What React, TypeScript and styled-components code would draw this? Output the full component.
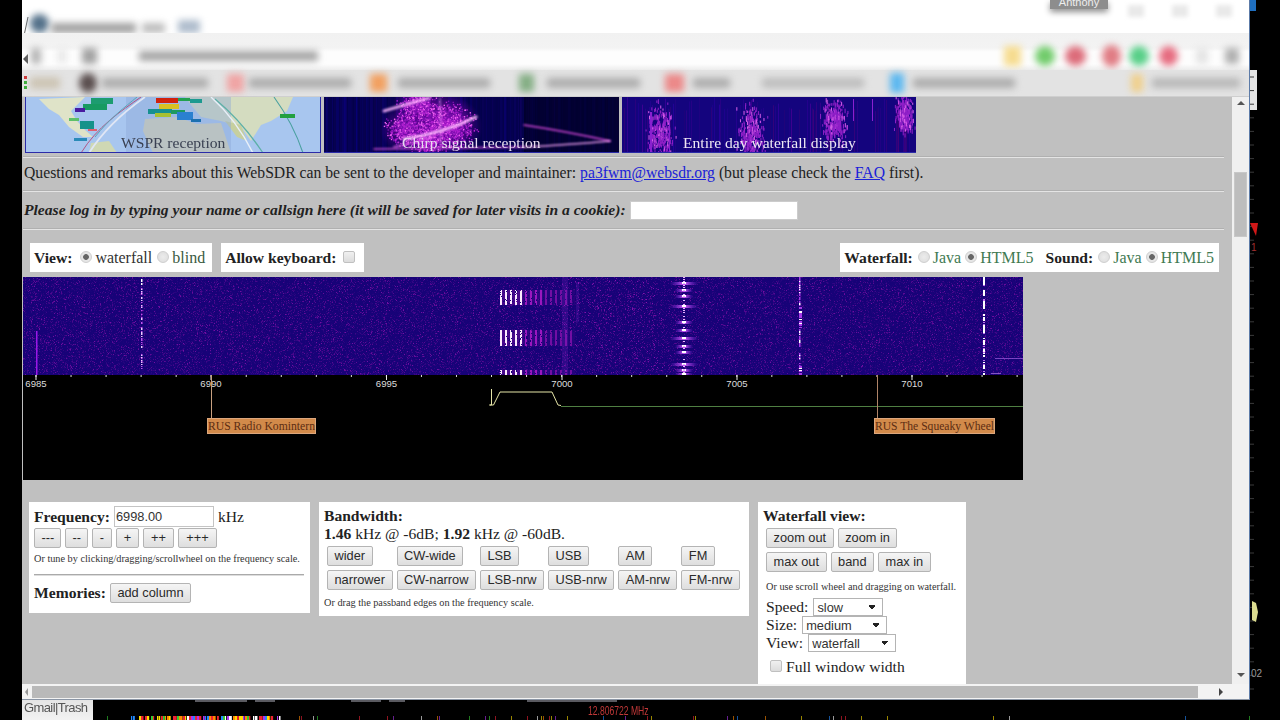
import { useEffect, useRef } from 'react'
import styled, { createGlobalStyle } from 'styled-components'

type Painter = (ctx: CanvasRenderingContext2D, w: number, h: number) => void
// page x from, page x to, colour, height
type Blot = [number, number, string, number?, boolean?]

const serif = '"Liberation Serif", "Times New Roman", serif'
const sans = '"Liberation Sans", Arial, sans-serif'

const GlobalStyle = createGlobalStyle`
  html, body {
    margin: 0;
    padding: 0;
    background: #000;
    overflow: hidden;
  }
`

const Desktop = styled.div`
  width: 1280px;
  height: 720px;
  background: #000;
  display: grid;
  grid-template-columns: 22px 1228px 30px;
  grid-template-rows: 700px 20px;
  overflow: hidden;
`
const Window = styled.div`
  grid-column: 2;
  display: flex;
  flex-direction: column;
  border-right: 1px solid #5c7ba8;
  border-bottom: 1px solid #8a95a5;
  box-sizing: border-box;
  background: #f0f0f0;
  overflow: hidden;
`

/* browser chrome: everything is out of focus in the video */
const Chrome = styled.div`
  height: 97px;
  flex: none;
  display: flex;
  flex-direction: column;
  overflow: hidden;
`
const TitleBar = styled.div`
  height: 33px;
  flex: none;
  background: #fff;
  display: flex;
  align-items: flex-end;
  position: relative;
`
const TabEdge = styled.svg`
  position: absolute;
  left: 0;
  top: 15px;
`
const UserChip = styled.div`
  position: absolute;
  left: 1028px;
  top: 0;
  width: 58px;
  height: 9px;
  background: #8d8d8d;
  box-shadow: 0 3px 6px rgba(0, 0, 0, 0.45);
  color: #eee;
  font: 11px/5px ${sans};
  text-align: center;
  overflow: hidden;
`
const WindowControls = styled.div`
  position: absolute;
  left: 1106px;
  top: 5px;
  display: flex;
  gap: 28px;
  filter: blur(2px);
`
const WindowControl = styled.div`
  width: 16px;
  height: 12px;
  background: #e9e9e9;
`
const ToolBar = styled.div`
  height: 37px;
  flex: none;
  background: linear-gradient(#f1f1f1 0, #f3f3f3 15px, #fdfdfd 19px, #fdfdfd 31px, #ececec 37px);
  display: flex;
  align-items: center;
  padding-top: 8px;
  box-sizing: border-box;
  position: relative;
`
const Chevron = styled.div`
  position: absolute;
  left: 1px;
  top: 21px;
  width: 0;
  height: 0;
  border-top: 5px solid transparent;
  border-bottom: 5px solid transparent;
  border-right: 5px solid #555;
`
const Bookmarks = styled.div`
  flex: 1;
  background: #e3e3e3;
  display: flex;
  align-items: center;
  border-bottom: 1px solid #cfcfcf;
  position: relative;
`
const BookmarkDots = styled.div`
  position: absolute;
  left: 2px;
  top: 6px;
  display: flex;
  flex-direction: column;
  gap: 2px;
`
const Dot = styled.div<{ $c: string }>`
  width: 3px;
  height: 3px;
  background: ${p => p.$c};
`
const Smudge = styled.div<{ $w: number; $h: number; $c: string; $round: boolean; $lead: number }>`
  width: ${p => p.$w}px;
  height: ${p => p.$h}px;
  background: ${p => p.$c};
  border-radius: ${p => (p.$round ? '50%' : '1px')};
  margin-left: ${p => p.$lead}px;
  flex: none;
  filter: blur(3.5px);
`

const Middle = styled.div`
  flex: 1;
  min-height: 0;
  display: flex;
`
const Content = styled.div`
  flex: 1;
  min-width: 0;
  background: #c0c0c0;
  padding-left: 1px;
  overflow: hidden;
  color: #222;
  font-family: ${serif};
  font-size: 15.6px;
`
const VScroll = styled.div`
  width: 17px;
  flex: none;
  background: #f0f0f0;
  display: flex;
  flex-direction: column;
  align-items: center;
  position: relative;
`
const VThumb = styled.div`
  position: absolute;
  left: 2px;
  top: 75px;
  width: 13px;
  height: 65px;
  background: #bdbdbd;
  border: 1px solid #c8c8c8;
  box-sizing: border-box;
`
const ArrowUp = styled.div`
  width: 0;
  height: 0;
  margin-top: 4px;
  border-left: 4px solid transparent;
  border-right: 4px solid transparent;
  border-bottom: 4px solid #555;
`
const ArrowDown = styled.div`
  width: 0;
  height: 0;
  margin-top: auto;
  margin-bottom: 7px;
  border-left: 4px solid transparent;
  border-right: 4px solid transparent;
  border-top: 4px solid #555;
`
const HScroll = styled.div`
  height: 15px;
  flex: none;
  background: #f3f3f3;
  display: flex;
  align-items: center;
  padding: 0 26px 0 3px;
  gap: 4px;
`
const HThumb = styled.div`
  width: 1166px;
  height: 12px;
  background: #b9b9b9;
`
const ArrowLeft = styled.div`
  width: 0;
  height: 0;
  border-top: 4px solid transparent;
  border-bottom: 4px solid transparent;
  border-right: 3px solid #999;
`
const ArrowRight = styled.div`
  width: 0;
  height: 0;
  margin-left: auto;
  border-top: 4px solid transparent;
  border-bottom: 4px solid transparent;
  border-left: 4px solid #444;
`

/* page */
const ThumbRow = styled.div`
  display: flex;
  gap: 3px;
  margin-left: 2px;
  height: 56px;
`
const Thumb = styled.div<{ $w: number }>`
  position: relative;
  width: ${p => p.$w}px;
  height: 56px;
  overflow: hidden;
  border-bottom: 1px solid #2b2ba8;
  box-sizing: border-box;
`
const Caption = styled.div<{ $left: number; $c: string }>`
  position: absolute;
  left: ${p => p.$left}px;
  top: 37px;
  font: 15.6px/18px ${serif};
  color: ${p => p.$c};
  white-space: nowrap;
  filter: blur(0.3px);
`
const Rule = styled.div<{ $top?: number }>`
  height: 1px;
  margin: ${p => p.$top ?? 0}px 8px 0 0;
  background: #e4e4e4;
  border-top: 1px solid #b0b0b0;
`
const Remarks = styled.div`
  height: 32px;
  line-height: 30px;
  font-size: 15.7px;
  padding-left: 1px;
  white-space: nowrap;
`
const MailLink = styled.a`
  color: #1a22d8;
  text-decoration: underline;
`
const LoginRow = styled.div`
  height: 36px;
  display: flex;
  align-items: center;
  gap: 4px;
  padding-left: 1px;
  font-weight: bold;
  font-style: italic;
  white-space: nowrap;
`
const LoginInput = styled.input`
  width: 168px;
  height: 19px;
  box-sizing: border-box;
  border: 1px solid #ccc;
  background: #fff;
  padding: 0;
`
const SelectorRow = styled.div`
  display: flex;
  height: 29px;
  margin: 13px 13px 5px 7px;
  gap: 9px;
`
const SelectorBox = styled.div<{ $push?: boolean }>`
  background: #fff;
  display: flex;
  align-items: center;
  padding: 0 ${p => (p.$push ? 5 : 6)}px 0 4px;
  white-space: nowrap;
  margin-left: ${p => (p.$push ? 'auto' : '0')};
`
const Strong = styled.b<{ $gap?: number }>`
  color: #222;
  margin-right: ${p => p.$gap ?? 6}px;
`
const OptionText = styled.span<{ $c: string; $gap?: number }>`
  color: ${p => p.$c};
  font-size: 16px;
  margin-right: ${p => p.$gap ?? 0}px;
`
const Radio = styled.input.attrs({ type: 'radio' })`
  appearance: none;
  width: 12px;
  height: 12px;
  margin: 0 3px 2px 2px;
  border-radius: 50%;
  border: 1px solid #cfcfcf;
  background: radial-gradient(circle, #ececec, #dcdcdc);
  box-sizing: border-box;
  &:checked {
    background: radial-gradient(circle, #666 0 2.5px, #e6e6e6 3.2px);
  }
`
const Check = styled.input.attrs({ type: 'checkbox' })`
  appearance: none;
  width: 12px;
  height: 12px;
  margin: 0 3px 2px 3px;
  border: 1px solid #c0c0c0;
  border-radius: 2px;
  background: linear-gradient(#f0f0f0, #dcdcdc);
  box-sizing: border-box;
`
const Sdr = styled.div`
  width: 1000px;
  height: 203px;
  background: #000;
  display: flex;
  flex-direction: column;
`
const PaintedCanvas = styled.canvas`
  display: block;
  filter: blur(0.35px);
`
const ScaleSvg = styled.svg`
  display: block;
  flex: 1;
`
const PanelRow = styled.div`
  display: flex;
  align-items: flex-start;
  gap: 9px;
  margin: 22px 0 0 6px;
`
const Panel = styled.div<{ $w: number; $h: number }>`
  width: ${p => p.$w}px;
  height: ${p => p.$h}px;
  box-sizing: border-box;
  background: #fff;
  padding: 5px 5px 0;
  line-height: 18px;
  flex: none;
`
const FreqLine = styled.div`
  display: flex;
  align-items: center;
  height: 21px;
  margin-top: -1px;
  margin-bottom: 1px;
`
const FreqInput = styled.input`
  width: 100px;
  height: 21px;
  box-sizing: border-box;
  border: 1px solid #c4c4c4;
  padding: 0 1px;
  margin: 0 4px 0 4px;
  font: 12.8px ${sans};
  color: #333;
`
const ButtonLine = styled.div<{ $top?: number; $left?: number }>`
  display: flex;
  gap: 4px;
  margin-top: ${p => p.$top ?? 0}px;
  padding-left: ${p => p.$left ?? 0}px;
`
const Btn = styled.button<{ $wide?: number }>`
  height: 20px;
  box-sizing: border-box;
  padding: 0 6.5px;
  width: ${p => (p.$wide ? `${p.$wide}px` : 'auto')};
  border: 1px solid #b4b4b4;
  border-radius: 2px;
  background: linear-gradient(#f5f5f5, #dedede);
  color: #2a2a2a;
  font: 12.8px/16px ${sans};
  white-space: nowrap;
`
const TinyNote = styled.div<{ $top: number; $left?: number; $bottom?: number }>`
  font-size: 10.25px;
  line-height: 12px;
  margin-top: ${p => p.$top}px;
  margin-bottom: ${p => p.$bottom ?? 0}px;
  padding-left: ${p => p.$left ?? 0}px;
  color: #333;
  white-space: nowrap;
`
const PanelRule = styled.div`
  height: 1px;
  background: #aaa;
  border-bottom: 1px solid #ddd;
  margin: 9px 1px 0 0;
`
const MemoryLine = styled.div`
  display: flex;
  align-items: center;
  gap: 4px;
  margin-top: 6px;
  height: 21px;
`
const ModeGrid = styled.div`
  display: grid;
  grid-template-columns: repeat(6, auto);
  justify-content: start;
  justify-items: start;
  gap: 4px;
  margin: 3px 0 0 3px;
`
const SelectLine = styled.div`
  display: flex;
  align-items: center;
  gap: 5px;
  height: 18px;
  padding-left: 3px;
`
const Picker = styled.select<{ $w: number }>`
  appearance: none;
  width: ${p => p.$w}px;
  height: 18px;
  box-sizing: border-box;
  border: 1px solid #b4b4b4;
  background-color: #fff;
  background-image: linear-gradient(45deg, transparent 50%, #222 50%), linear-gradient(-45deg, transparent 50%, #222 50%);
  background-size: 3px 5px, 3px 5px;
  background-position: right 10px top 6px, right 7px top 6px;
  background-repeat: no-repeat;
  color: #333;
  padding: 0 0 0 3px;
  font: 12.8px ${sans};
`
const FullWidth = styled.div`
  display: flex;
  align-items: center;
  margin: 6px 0 0 4px;
  gap: 1px;
`

/* things outside the browser window */
const RightEdge = styled.svg`
  grid-column: 3;
  display: block;
`
const BottomStrip = styled.div`
  grid-column: 1 / 4;
  grid-row: 2;
  display: flex;
  padding-left: 22px;
`
const GmailTab = styled.div`
  width: 71px;
  flex: none;
  background: linear-gradient(#e4e4e4, #f2f2f2);
  color: #555;
  font: 13px/15px ${sans};
  letter-spacing: -0.6px;
  padding-left: 2px;
  box-sizing: border-box;
  white-space: nowrap;
  filter: blur(0.3px);
`
const StripBody = styled.div`
  position: relative;
  flex: 1;
  background: #000;
`
const Tuned = styled.div`
  position: absolute;
  left: 495px;
  top: 4px;
  color: #c03838;
  font: 13px/13px ${sans};
  transform: scaleX(0.66);
  transform-origin: left center;
  white-space: nowrap;
`

function mulberry(seed: number) {
  return () => {
    seed |= 0
    seed = (seed + 0x6d2b79f5) | 0
    let t = Math.imul(seed ^ (seed >>> 15), 1 | seed)
    t = (t + Math.imul(t ^ (t >>> 7), 61 | t)) ^ t
    return ((t ^ (t >>> 14)) >>> 0) / 4294967296
  }
}

function Painted({ paint, width, height }: { paint: Painter; width: number; height: number }) {
  const ref = useRef<HTMLCanvasElement>(null)
  useEffect(() => {
    const ctx = ref.current?.getContext('2d')
    if (ctx) paint(ctx, width, height)
  }, [paint, width, height])
  return <PaintedCanvas ref={ref} width={width} height={height} />
}

// strength 0..1 turned into the websdr palette: navy, violet, magenta, white
function heat(v: number): [number, number, number] {
  if (v < 0.45) return [18 + v * 150, 2 + v * 14, 118 + v * 60]
  if (v < 0.8) {
    const t = (v - 0.45) / 0.35
    return [86 + t * 140, 8 + t * 30, 145 + t * 95]
  }
  const t = Math.min(1, (v - 0.8) / 0.2)
  return [226 + t * 29, 38 + t * 217, 236 + t * 19]
}

const paintWaterfall: Painter = (ctx, w, h) => {
  const rnd = mulberry(7)
  const img = ctx.createImageData(w, h)
  const cw = (x: number, from: number, to: number, y: number) => y >= from && y < to && x >= 477 && x < 552
  for (let y = 0; y < h; y++) {
    for (let x = 0; x < w; x++) {
      const n = rnd()
      let v = 0.03 + Math.pow(n, 7) * 0.5
      if (x > 540 && x < 640 && n > 0.8) v += 0.05
      const i = (y * w + x) * 4
      const [r, g, b] = heat(v)
      img.data[i] = r
      img.data[i + 1] = g
      img.data[i + 2] = b
      img.data[i + 3] = 255
      if (cw(x, 13, 28, y) || cw(x, 53, 69, y) || cw(x, 93, 98, y)) {
        const sx = x - 477
        const stripe = sx % 5 < 2
        let s = 0
        if (x < 500) s = stripe ? 0.98 : 0.35
        else if (x < 520) s = stripe ? 0.62 : 0.2
        else s = stripe ? 0.52 : 0.12
        if (rnd() < 0.88) {
          const [a, c, d] = heat(s)
          img.data[i] = a
          img.data[i + 1] = c
          img.data[i + 2] = d
        }
      }
    }
  }
  ctx.putImageData(img, 0, 0)

  const line = (x: number, y: number, len: number, width: number, color: string) => {
    ctx.fillStyle = color
    ctx.fillRect(x, y, width, len)
  }
  // faint columns around 7000
  ctx.globalAlpha = 0.16
  line(539, 0, 98, 6, '#a030e0')
  line(553, 5, 40, 3, '#a030e0')
  ctx.globalAlpha = 1
  // 6988 carrier
  for (let y = 0; y < 94; y++) {
    if (rnd() < 0.55) line(118, y, 1, 1.5, y < 10 ? '#fff' : rnd() < 0.5 ? '#f0c8ff' : '#c050ee')
  }
  line(13, 54, 44, 1.5, '#9a18e8')
  // wide bursts at 7003.5
  const bursts = [5, 12, 18, 28, 44, 52, 60, 68, 74, 86, 92, 96]
  bursts.forEach((y, i) => {
    const half = i % 3 === 0 ? 13 : 8
    const g = ctx.createLinearGradient(660 - half, 0, 660 + half + 2, 0)
    g.addColorStop(0, 'rgba(150,40,230,0)')
    g.addColorStop(0.5, '#d060f8')
    g.addColorStop(1, 'rgba(150,40,230,0)')
    ctx.fillStyle = g
    ctx.fillRect(660 - half, y, half * 2 + 2, 3)
    line(659, y, 2, 4, '#fff')
  })
  for (let y = 0; y < 98; y++) if (rnd() < 0.3) line(660, y, 1, 2, '#e8b0ff')
  // 7006.5 carrier
  for (let y = 0; y < 98; y++) {
    const hot = (y > 28 && y < 52) || y > 88
    if (rnd() < 0.7) line(776, y, 1, hot ? 3 : 1.5, rnd() < 0.25 ? '#fff' : '#a838e8')
  }
  // 7012 carrier, almost white
  for (let y = 0; y < 98; y++) {
    if (y % 12 < 8 && rnd() < 0.85) line(960, y, 1, 2, '#fff')
    else if (rnd() < 0.3) line(960, y, 1, 2, '#c070f0')
  }
  ctx.globalAlpha = 0.7
  line(972, 81, 1, 28, '#a060e0')
  ctx.globalAlpha = 1
  ctx.fillStyle = 'rgba(200,140,240,0.6)'
  ctx.fillRect(968, 96, 10, 1)
}

const paintChirp: Painter = (ctx, w, h) => {
  const rnd = mulberry(21)
  ctx.fillStyle = '#04024a'
  ctx.fillRect(0, 0, w, h)
  for (let x = 0; x < w; x += 2) {
    ctx.fillStyle = `rgba(${10 + rnd() * 20},0,${90 + rnd() * 90},${rnd() * 0.4})`
    ctx.fillRect(x, 0, 1 + rnd() * 2, h)
  }
  ctx.fillStyle = 'rgba(0,0,30,0.6)'
  ctx.fillRect(200, 0, 95, h)
  const spots = [
    [92, 8, 20],
    [115, 22, 28],
    [80, 32, 20],
    [130, 30, 24],
    [105, 42, 22],
  ]
  spots.forEach(([cx, cy, r]) => {
    const g = ctx.createRadialGradient(cx, cy, 0, cx, cy, r * 1.2)
    g.addColorStop(0, 'rgba(170,20,200,0.75)')
    g.addColorStop(1, 'rgba(120,0,170,0)')
    ctx.fillStyle = g
    ctx.fillRect(cx - r * 1.2, cy - r * 1.2, r * 2.4, r * 2.4)
  })
  // blob is made of dots so it keeps the noisy look
  ctx.filter = 'blur(0.7px)'
  spots.forEach(([cx, cy, r]) => {
    for (let i = 0; i < 500; i++) {
      const a = rnd() * Math.PI * 2
      const d = r * Math.sqrt(-Math.log(1 - rnd() * 0.98)) * 0.55
      const x = cx + Math.cos(a) * d
      const y = cy + Math.sin(a) * d * 0.9
      ctx.fillStyle = rnd() < 0.2 ? '#ee60f0' : rnd() < 0.6 ? '#b020d0' : '#7c10b0'
      ctx.fillRect(x, y, 1.4, 1.4)
    }
  })
  ctx.lineCap = 'round'
  const curve = (pts: number[], width: number, color: string) => {
    ctx.strokeStyle = color
    ctx.lineWidth = width
    ctx.beginPath()
    ctx.moveTo(pts[0], pts[1])
    ctx.quadraticCurveTo(pts[2], pts[3], pts[4], pts[5])
    ctx.stroke()
  }
  ctx.filter = 'blur(0.9px)'
  curve([60, 14, 80, 8, 105, 1], 3, 'rgba(255,180,255,0.85)')
  curve([80, 42, 120, 36, 152, 20], 3, 'rgba(255,190,255,0.95)')
  curve([70, 50, 90, 46, 110, 40], 2, 'rgba(255,120,255,0.7)')
  curve([116, 1, 117, 25, 117, 50], 1.5, 'rgba(255,190,255,0.5)')
  curve([200, 28, 240, 34, 286, 44], 1.4, 'rgba(240,80,240,0.9)')
  curve([286, 44, 240, 48, 200, 50], 1.5, 'rgba(255,170,255,0.9)')
  curve([200, 50, 120, 51, 50, 52], 1.4, 'rgba(235,90,235,0.85)')
  ctx.filter = 'none'
}

const paintDay: Painter = (ctx, w, h) => {
  const rnd = mulberry(5)
  ctx.fillStyle = '#14047e'
  ctx.fillRect(0, 0, w, h)
  for (let x = 0; x < w; x++) {
    if (rnd() < 0.25) {
      ctx.fillStyle = `rgba(${40 + rnd() * 60},0,${110 + rnd() * 70},${0.2 + rnd() * 0.4})`
      ctx.fillRect(x, rnd() * 15, 1, h)
    }
  }
  const clusters = [
    [38, 36, 10, 24],
    [129, 36, 11, 24],
    [212, 24, 10, 18],
    [282, 16, 7, 15],
  ]
  ctx.filter = 'blur(0.5px)'
  clusters.forEach(([cx, cy, sx, sy]) => {
    for (let i = 0; i < 300; i++) {
      const g1 = rnd() + rnd() + rnd() - 1.5
      const g2 = rnd() + rnd() + rnd() - 1.5
      ctx.fillStyle = rnd() < 0.2 ? '#d860e8' : '#9020c8'
      ctx.fillRect(cx + g1 * sx * 1.1, cy + g2 * sy * 1.1, 1, 2 + rnd() * 3)
    }
  })
  ctx.filter = 'none'
  ctx.fillStyle = '#8a20d0'
  ctx.fillRect(28, 15, 2, 41)
  ctx.fillRect(47, 15, 1, 41)
  ctx.fillRect(231, 2, 1, 22)
  ctx.fillRect(250, 2, 1, 22)
}

const paintStrip: Painter = (ctx, w, h) => {
  const rnd = mulberry(11)
  ctx.fillStyle = '#000'
  ctx.fillRect(0, 0, w, h)
  ctx.fillStyle = '#5a5a60'
  ;[[102, 52], [162, 20], [258, 30], [296, 16], [434, 74], [506, 18]].forEach(([x, l]) => ctx.fillRect(x, 0, l, 2))
  const hues = ['#e23', '#f80', '#fd0', '#3c3', '#28f', '#fff', '#a3e']
  for (let x = 2; x < w; x += 2) {
    const dense = x > 36 && x < 190
    if (rnd() < (dense ? 0.8 : x < 800 ? 0.1 : 0.015)) {
      const c = x < 92 && x > 50 ? hues[Math.floor(rnd() * 4)] : hues[Math.floor(rnd() * hues.length)]
      ctx.globalAlpha = dense ? 1 : 0.6
      ctx.fillStyle = c
      ctx.fillRect(x, 16, dense ? 1 + rnd() * 2 : 1, 4)
    }
  }
  ctx.globalAlpha = 1
}

function MapThumb() {
  const blocks: [number, number, number, number, string][] = [
    [58, 7, 24, 6, '#169a62'],
    [50, 11, 10, 4, '#4a1aa0'],
    [66, 1, 22, 6, '#1f9c70'],
    [44, 21, 10, 3, '#5cc06a'],
    [55, 24, 14, 8, '#17928a'],
    [63, 32, 9, 2, '#e06070'],
    [49, 41, 13, 3, '#2a8ab8'],
    [131, 1, 22, 5, '#d02010'],
    [134, 7, 20, 5, '#d8c020'],
    [153, 1, 12, 3, '#20a050'],
    [165, 2, 12, 4, '#1a9a90'],
    [123, 12, 24, 5, '#169090'],
    [130, 16, 16, 4, '#a8c030'],
    [146, 13, 14, 4, '#1a9a60'],
    [152, 15, 16, 8, '#2a80d0'],
    [166, 22, 10, 3, '#1a70b0'],
    [255, 17, 15, 4, '#20a040'],
  ]
  return (
    <svg width="296" height="56" viewBox="0 0 296 56" style={{ display: 'block' }}>
      <defs>
        <filter id="mapSoft"><feGaussianBlur stdDeviation="0.6" /></filter>
      </defs>
      <rect width="296" height="56" fill="#a8c6ef" />
      <g filter="url(#mapSoft)">
        <path d="M14 2 L60 0 L46 14 L52 24 L60 33 L68 40 L58 40 L44 30 L34 18 L24 12 Z" fill="#dfe3c8" />
        <path d="M66 46 L84 44 L92 56 L64 56 Z" fill="#cfd8b4" />
        <path d="M120 22 L152 20 L172 27 L196 26 L206 56 L128 56 L118 34 Z" fill="#d9d6b6" />
        <path d="M160 0 L268 0 L262 14 L246 24 L236 28 L226 44 L216 30 L196 24 L176 20 L166 8 Z" fill="#d4dcc0" />
        <path d="M200 24 L216 28 L222 44 L212 40 Z" fill="#c6cf9f" />
        <rect x="101" width="105" height="56" fill="#8aa4d8" opacity="0.4" />
        <path d="M56 56 C72 30 96 14 116 0" fill="none" stroke="#b24a78" strokeWidth="0.9" />
        <path d="M64 56 C78 34 100 14 120 0" fill="none" stroke="#e0e6f4" strokeWidth="1.8" />
        <path d="M70 40 C84 22 100 10 112 0" fill="none" stroke="#5aa5b8" strokeWidth="1" />
        <path d="M190 2 C212 20 226 38 238 56" fill="none" stroke="#5db0a8" strokeWidth="1.3" />
        <path d="M249 0 C262 18 272 38 278 56" fill="none" stroke="#4aa0a0" strokeWidth="1.1" />
        <path d="M186 0 C206 18 218 36 228 56" fill="none" stroke="#e8eff8" strokeWidth="1.4" />
        {blocks.map(([x, y, w, h, c], i) => (
          <rect key={i} x={x} y={y} width={w} height={h} fill={c} />
        ))}
      </g>
      <rect x="0" y="-2" width="296" height="58" fill="none" stroke="#2b2ba8" strokeWidth="2" />
    </svg>
  )
}

const MINOR = Array.from({ length: 29 }, (_, i) => 13 + i * 35.04)
const MAJOR = [
  { x: 13, label: '6985' },
  { x: 188, label: '6990' },
  { x: 363.5, label: '6995' },
  { x: 539, label: '7000' },
  { x: 714, label: '7005' },
  { x: 889, label: '7010' },
]

function Scale() {
  return (
    <ScaleSvg viewBox="0 0 1000 105" width="1000" height="105">
      {MINOR.map(x => (
        <line key={x} x1={x} x2={x} y1="0" y2="2" stroke="#ddd" strokeWidth="1" />
      ))}
      {MAJOR.map(t => (
        <g key={t.label}>
          <line x1={t.x} x2={t.x} y1="0" y2="5" stroke="#eee" strokeWidth="1" />
          <text x={t.x} y="12" textAnchor="middle" fontFamily={sans} fontSize="9.6" fill="#ddd">
            {t.label}
          </text>
        </g>
      ))}
      <line x1="538" x2="1000" y1="31.5" y2="31.5" stroke="#4f7f42" strokeWidth="1" />
      <polyline
        points="468.5,14 468.5,30 466.5,30 470.5,30 477,17 529,17 535,30 538,30.5"
        fill="none"
        stroke="#e6e6a8"
        strokeWidth="1"
      />
      <line x1="188.5" x2="188.5" y1="0" y2="43" stroke="#c8a080" strokeWidth="1" />
      <line x1="854.5" x2="854.5" y1="0" y2="43" stroke="#b08468" strokeWidth="1" />
      <rect x="184.5" y="43.5" width="108" height="15" fill="#d28a4a" stroke="#dca67c" />
      <text x="185" y="54.5" fontFamily={serif} fontSize="11.5" fill="#5b2c12" textLength="107" lengthAdjust="spacingAndGlyphs">
        RUS Radio Komintern
      </text>
      <rect x="851.5" y="43.5" width="120" height="15" fill="#d28a4a" stroke="#dca67c" />
      <text x="852" y="54.5" fontFamily={serif} fontSize="11.5" fill="#5b2c12" textLength="119" lengthAdjust="spacingAndGlyphs">
        RUS The Squeaky Wheel
      </text>
    </ScaleSvg>
  )
}

function RightStrip() {
  const ticks = Array.from({ length: 47 }, (_, i) => 77 + i * 13.6)
  return (
    <RightEdge width="30" height="700" viewBox="0 0 30 700">
      <rect width="6" height="11" fill="#1f6fc0" />
      <rect y="70" width="7" height="40" fill="#e6e6e6" />
      {ticks.map(y => (
        <line key={y} x1="0" x2="4" y1={y} y2={y} stroke="#3a3a3a" strokeWidth="1" />
      ))}
      <path d="M0 223 H8 L6 236 Z" fill="#d01818" />
      <text x="1" y="251" fontFamily={sans} fontSize="10" fill="#a03030">1</text>
      <path d="M2 601 L6 603 L8 612 L6 622 L2 620 Z" fill="#dcdc90" />
      <text x="1" y="677" fontFamily={sans} fontSize="10" fill="#999">02</text>
    </RightEdge>
  )
}

// blots are listed by where they sit on the page, the window starts at x = 22
function Blots({ items }: { items: Blot[] }) {
  let cursor = 22
  return (
    <>
      {items.map(([from, to, color, height, round]) => {
        const lead = from - cursor
        cursor = to
        return <Smudge key={from} $w={to - from} $h={height ?? 9} $c={color} $round={!!round} $lead={lead} />
      })}
    </>
  )
}

const TITLE_BLOTS: Blot[] = [
  [30, 49, '#54718a', 19, true],
  [51, 136, '#a0a0a0', 10],
  [142, 165, '#bcbcbc', 10],
  [178, 200, '#aebccc', 13],
]
const TOOL_BLOTS: Blot[] = [
  [31, 41, '#b4b4b4', 16],
  [58, 66, '#e6e6e6', 14],
  [82, 97, '#a2a2a2', 16],
  [139, 318, '#a4a4a4', 10],
  [1004, 1021, '#f6dc90', 20],
  [1035, 1055, '#72cc6c', 20, true],
  [1065, 1086, '#dc6c7a', 20, true],
  [1102, 1121, '#e07c84', 22, true],
  [1129, 1149, '#58cf88', 20, true],
  [1159, 1178, '#e66c80', 20, true],
  [1196, 1208, '#e4e4e4', 16],
  [1225, 1239, '#b0b0b0', 16],
]
const MARK_BLOTS: Blot[] = [
  [30, 60, '#cdc5b5', 12],
  [79, 97, '#5a4e4e', 20, true],
  [102, 208, '#adadad', 10],
  [227, 244, '#f0a4a4', 18],
  [249, 351, '#adadad', 10],
  [370, 387, '#f2a060', 18],
  [398, 490, '#adadad', 10],
  [519, 534, '#84ae84', 18],
  [547, 640, '#adadad', 10],
  [665, 684, '#ec8888', 18],
  [693, 730, '#adadad', 10],
  [762, 864, '#bdbdbd', 10],
  [890, 904, '#5cb8f0', 20],
  [913, 1015, '#adadad', 10],
  [1131, 1143, '#f0d08c', 18],
  [1152, 1240, '#b8b8b8', 10],
]

const BAND_MODES = ['wider', 'CW-wide', 'LSB', 'USB', 'AM', 'FM', 'narrower', 'CW-narrow', 'LSB-nrw', 'USB-nrw', 'AM-nrw', 'FM-nrw']
const STEPS: [string, number][] = [['---', 27], ['--', 23], ['-', 20], ['+', 23], ['++', 31], ['+++', 39]]
const GREEN = '#3f7a52'

export default function App() {
  return (
    <Desktop>
      <GlobalStyle />
      <div />
      <Window>
        <Chrome>
          <TitleBar>
            <TabEdge width="8" height="30" viewBox="0 0 8 30">
              <line x1="6" y1="2" x2="0" y2="30" stroke="#666" strokeWidth="1" />
            </TabEdge>
            <Blots items={TITLE_BLOTS} />
            <UserChip>Anthony</UserChip>
            <WindowControls>
              <WindowControl />
              <WindowControl />
              <WindowControl />
            </WindowControls>
          </TitleBar>
          <ToolBar>
            <Chevron />
            <Blots items={TOOL_BLOTS} />
          </ToolBar>
          <Bookmarks>
            <BookmarkDots>
              <Dot $c="#c33" />
              <Dot $c="#3a3" />
              <Dot $c="#3a3" />
            </BookmarkDots>
            <Blots items={MARK_BLOTS} />
          </Bookmarks>
        </Chrome>
        <Middle>
          <Content>
            <ThumbRow>
              <Thumb $w={296}>
                <MapThumb />
                <Caption $left={96} $c="#3a4152">WSPR reception</Caption>
              </Thumb>
              <Thumb $w={295}>
                <Painted paint={paintChirp} width={295} height={56} />
                <Caption $left={78} $c="#e8dcf0">Chirp signal reception</Caption>
              </Thumb>
              <Thumb $w={294}>
                <Painted paint={paintDay} width={294} height={56} />
                <Caption $left={61} $c="#eee8f4">Entire day waterfall display</Caption>
              </Thumb>
            </ThumbRow>
            <Rule $top={3} />
            <Remarks>
              Questions and remarks about this WebSDR can be sent to the developer and maintainer:{' '}
              <MailLink href="#">pa3fwm@websdr.org</MailLink> (but please check the <MailLink href="#">FAQ</MailLink> first).
            </Remarks>
            <Rule />
            <LoginRow>
              Please log in by typing your name or callsign here (it will be saved for later visits in a cookie):
              <LoginInput />
            </LoginRow>
            <Rule />
            <SelectorRow>
              <SelectorBox>
                <Strong>View:</Strong>
                <Radio name="view" defaultChecked />
                <OptionText $c="#333" $gap={3}>waterfall</OptionText>
                <Radio name="view" />
                <OptionText $c="#3a5a42" $gap={1}>blind</OptionText>
              </SelectorBox>
              <SelectorBox>
                <Strong $gap={4}>Allow keyboard:</Strong>
                <Check />
              </SelectorBox>
              <SelectorBox $push>
                <Strong $gap={3}>Waterfall:</Strong>
                <Radio name="wf" />
                <OptionText $c={GREEN} $gap={2}>Java</OptionText>
                <Radio name="wf" defaultChecked />
                <OptionText $c={GREEN} $gap={12}>HTML5</OptionText>
                <Strong $gap={3}>Sound:</Strong>
                <Radio name="snd" />
                <OptionText $c={GREEN} $gap={2}>Java</OptionText>
                <Radio name="snd" defaultChecked />
                <OptionText $c={GREEN}>HTML5</OptionText>
              </SelectorBox>
            </SelectorRow>
            <Sdr>
              <Painted paint={paintWaterfall} width={1000} height={98} />
              <Scale />
            </Sdr>
            <PanelRow>
              <Panel $w={281} $h={111}>
                <FreqLine>
                  <b>Frequency:</b>
                  <FreqInput defaultValue="6998.00" />
                  kHz
                </FreqLine>
                <ButtonLine>
                  {STEPS.map(([s, w]) => (
                    <Btn key={s} $wide={w}>{s}</Btn>
                  ))}
                </ButtonLine>
                <TinyNote $top={5}>Or tune by clicking/dragging/scrollwheel on the frequency scale.</TinyNote>
                <PanelRule />
                <MemoryLine>
                  <b>Memories:</b>
                  <Btn>add column</Btn>
                </MemoryLine>
              </Panel>
              <Panel $w={430} $h={114}>
                <b>Bandwidth:</b>
                <div><b>1.46</b> kHz @ -6dB; <b>1.92</b> kHz @ -60dB.</div>
                <ModeGrid>
                  {BAND_MODES.map(m => (
                    <Btn key={m}>{m}</Btn>
                  ))}
                </ModeGrid>
                <TinyNote $top={7}>Or drag the passband edges on the frequency scale.</TinyNote>
              </Panel>
              <Panel $w={208} $h={190}>
                <b>Waterfall view:</b>
                <ButtonLine $top={3} $left={3}>
                  <Btn>zoom out</Btn>
                  <Btn>zoom in</Btn>
                </ButtonLine>
                <ButtonLine $top={4} $left={3}>
                  <Btn>max out</Btn>
                  <Btn>band</Btn>
                  <Btn>max in</Btn>
                </ButtonLine>
                <TinyNote $top={9} $left={3} $bottom={5}>Or use scroll wheel and dragging on waterfall.</TinyNote>
                <SelectLine>
                  Speed:
                  <Picker $w={70} defaultValue="slow"><option>slow</option><option>fast</option></Picker>
                </SelectLine>
                <SelectLine>
                  Size:
                  <Picker $w={85} defaultValue="medium"><option>small</option><option>medium</option><option>large</option></Picker>
                </SelectLine>
                <SelectLine>
                  View:
                  <Picker $w={88} defaultValue="waterfall"><option>waterfall</option><option>blind</option></Picker>
                </SelectLine>
                <FullWidth>
                  <Check />
                  Full window width
                </FullWidth>
              </Panel>
            </PanelRow>
          </Content>
          <VScroll>
            <VThumb />
            <ArrowUp />
            <ArrowDown />
          </VScroll>
        </Middle>
        <HScroll>
          <ArrowLeft />
          <HThumb />
          <ArrowRight />
        </HScroll>
      </Window>
      <RightStrip />
      <BottomStrip>
        <GmailTab>Gmail|Trash</GmailTab>
        <StripBody>
          <Painted paint={paintStrip} width={1187} height={20} />
          <Tuned>12.806722 MHz</Tuned>
        </StripBody>
      </BottomStrip>
    </Desktop>
  )
}
